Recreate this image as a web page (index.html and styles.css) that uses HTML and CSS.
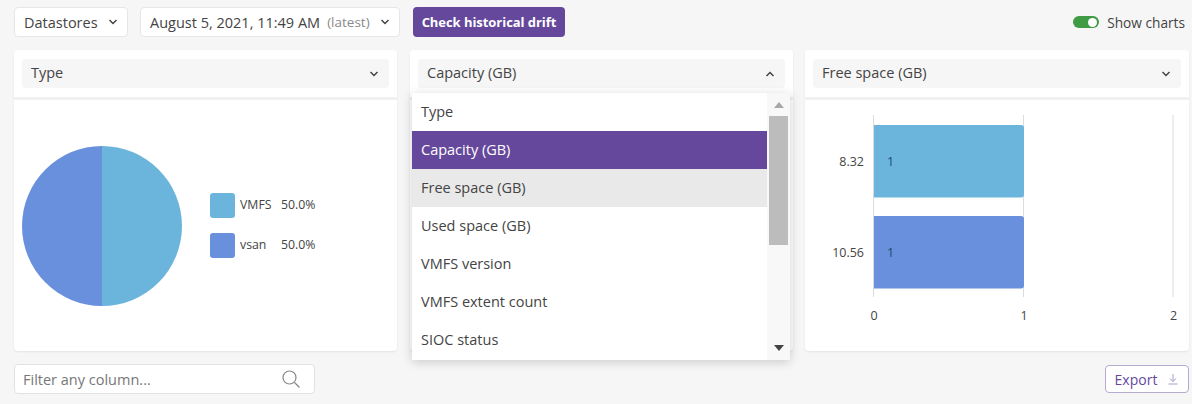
FILE: index.html
```html
<!DOCTYPE html>
<html lang="en">
<head>
<meta charset="utf-8">
<title>Datastores</title>
<link rel="stylesheet" href="styles.css">
</head>
<body>
<div class="page">
  <div class="toolbar">
    <button class="btn btn-kind">Datastores<svg class="chev" viewBox="0 0 10 6"><path d="M1.5 1 5 4.5 8.5 1"/></svg></button>
    <button class="btn btn-date">August 5, 2021, 11:49 AM <span class="latest">(latest)</span><svg class="chev" viewBox="0 0 10 6"><path d="M1.5 1 5 4.5 8.5 1"/></svg></button>
    <button class="btn-primary">Check historical drift</button>
    <div class="toggle-wrap"><span class="toggle"><span class="knob"></span></span><span>Show charts</span></div>
  </div>

  <div class="cards">
    <section class="card">
      <div class="card-head"><div class="select"><span>Type</span><svg class="chev" viewBox="0 0 10 6"><path d="M1.5 1 5 4.5 8.5 1"/></svg></div></div>
      <div class="card-body pie-body">
        <svg class="pie" viewBox="0 0 160 160"><path class="c1" d="M80 0a80 80 0 0 1 0 160z"/><path class="c2" d="M80 0a80 80 0 0 0 0 160z"/></svg>
        <div class="legend">
          <div class="legend-row"><span class="swatch c1-bg"></span><span class="legend-name">VMFS</span><span>50.0%</span></div>
          <div class="legend-row"><span class="swatch c2-bg"></span><span class="legend-name">vsan</span><span>50.0%</span></div>
        </div>
      </div>
    </section>

    <section class="card card-open">
      <div class="card-head"><div class="select"><span>Capacity (GB)</span><svg class="chev" viewBox="0 0 10 6"><path d="M1.5 5 5 1.5 8.5 5"/></svg></div></div>
      <div class="card-body"></div>
      <div class="menu">
        <ul class="menu-list">
          <li>Type</li>
          <li class="selected">Capacity (GB)</li>
          <li class="hover">Free space (GB)</li>
          <li>Used space (GB)</li>
          <li>VMFS version</li>
          <li>VMFS extent count</li>
          <li>SIOC status</li>
        </ul>
        <div class="scrollbar">
          <span class="arrow-up"></span>
          <span class="thumb"></span>
          <span class="arrow-down"></span>
        </div>
      </div>
    </section>

    <section class="card card-last">
      <div class="card-head"><div class="select"><span>Free space (GB)</span><svg class="chev" viewBox="0 0 10 6"><path d="M1.5 1 5 4.5 8.5 1"/></svg></div></div>
      <div class="card-body">
        <svg class="bars" viewBox="0 0 384 251">
          <line class="grid" x1="68.5" y1="15" x2="68.5" y2="197"/>
          <line class="grid" x1="218.5" y1="15" x2="218.5" y2="197"/>
          <line class="grid" x1="368" y1="15" x2="368" y2="197"/>
          <path class="c1" d="M69 25h147a3 3 0 0 1 3 3v66.500a3 3 0 0 1-3 3H69z"/>
          <path class="c2" d="M69 116h147a3 3 0 0 1 3 3v66.500a3 3 0 0 1-3 3H69z"/>
          <text class="tick" x="59" y="66" text-anchor="end">8.32</text>
          <text class="tick" x="59" y="157" text-anchor="end">10.56</text>
          <text class="val" x="82" y="66">1</text>
          <text class="val" x="82" y="157">1</text>
          <text class="tick" x="69" y="220" text-anchor="middle">0</text>
          <text class="tick" x="219" y="220" text-anchor="middle">1</text>
          <text class="tick" x="368.500" y="220" text-anchor="middle">2</text>
        </svg>
      </div>
    </section>
  </div>

  <div class="footer">
    <div class="filter"><span>Filter any column...</span>
      <svg class="search" viewBox="0 0 18 18"><circle cx="7.500" cy="7.500" r="6.500"/><path d="M12.500 12.500 17.500 17.500"/></svg>
    </div>
    <button class="export">Export<svg class="dl" viewBox="0 0 12 12"><path d="M6 1v7.500M2.800 5.500 6 8.500l3.200-3M1.500 11h9"/></svg></button>
  </div>
</div>
</body>
</html>
```

FILE: styles.css
```css
* { box-sizing: border-box; }
html, body { margin: 0; padding: 0; }
body {
  width: 1192px;
  height: 404px;
  overflow: hidden;
  background: #f6f6f6;
  font-family: "Open Sans", "Liberation Sans", sans-serif;
  font-size: 14.500px;
  color: #444;
}
.page { padding: 7px 3px 0 14px; }
.toolbar { display: flex; align-items: center; height: 30px; }
.btn {
  height: 30px;
  display: flex;
  align-items: center;
  background: #fff;
  border: 1px solid #e6e6e6;
  border-radius: 4px;
  font: inherit;
  color: #444;
  padding: 0 9px;
  white-space: nowrap;
}
.btn-kind { width: 114px; justify-content: space-between; }
.btn-date { width: 260px; margin-left: 12px; justify-content: flex-start; }
.btn-date .chev { margin-left: auto; }
.latest { font-size: 13.500px; color: #8a8a8a; margin-left: 7px; }
.chev { width: 10px; height: 6px; flex: none; fill: none; stroke: #444; stroke-width: 1.500; }
.btn-primary {
  height: 30px;
  width: 152px;
  margin-left: 13px;
  border: 0;
  border-radius: 4px;
  background: #65489c;
  color: #fff;
  font: 700 13px "Open Sans", sans-serif;
  letter-spacing: -0.05px;
  padding: 0;
}
.toggle-wrap { margin-left: auto; margin-right: 4px; display: flex; align-items: center; gap: 8px; font-size: 13.700px; }
.toggle { width: 26px; height: 12px; border-radius: 6px; background: #3f9c45; display: flex; align-items: center; justify-content: flex-end; padding-right: 2px; }
.knob { width: 9px; height: 9px; border-radius: 50%; background: #fff; }

.cards { display: grid; grid-template-columns: 383px 383px 383px; column-gap: 13px; margin-top: 13px; }
.card { position: relative; height: 301px; background: #fff; border-radius: 4px; box-shadow: 0 1px 2px rgba(0,0,0,.08); display: flex; flex-direction: column; }
.card-last { margin-left: -1px; }
.card-head { height: 50px; padding: 9px 8px 0; border-bottom: 3px solid #f1f1f1; flex: none; }
.select { height: 29px; background: #f6f6f6; border-radius: 4px; display: flex; align-items: center; justify-content: space-between; padding: 0 10px 2px 9px; }
.select .chev { margin-top: 2px; }
.card-body { flex: 1; min-height: 0; }
.pie-body { display: flex; align-items: flex-start; padding: 46px 0 0 8px; }
.pie { width: 160px; height: 160px; flex: none; display: block; }
.c1 { fill: #6bb5dd; }
.c2 { fill: #6890dc; }
.c1-bg { background: #6bb5dd; }
.c2-bg { background: #6890dc; }
.legend { margin: 47px 0 0 28px; display: flex; flex-direction: column; gap: 15px; font-size: 12.300px; }
.legend-row { display: flex; align-items: flex-start; height: 25px; line-height: 23px; }
.swatch { width: 25px; height: 25px; border-radius: 3px; margin-right: 5px; }
.legend-name { width: 41px; }

.menu {
  position: absolute;
  left: 2px;
  top: 43px;
  width: 378px;
  height: 267px;
  background: #fff;
  display: flex;
  box-shadow: 0 2px 10px rgba(0,0,0,.18);
  z-index: 2;
}
.menu-list { list-style: none; margin: 0; padding: 0; flex: 1; }
.menu-list li { height: 38px; line-height: 38px; padding-left: 9px; }
.menu-list .selected { background: #65489c; color: #fff; }
.menu-list .hover { background: #e9e9e9; }
.scrollbar { width: 23px; background: #f8f8f8; display: flex; flex-direction: column; align-items: center; padding-top: 9px; }
.arrow-up { width: 0; height: 0; border: 5px solid transparent; border-top: 0; border-bottom: 6px solid #a8a8a8; }
.thumb { width: 19px; height: 129px; background: #bcbcbc; margin-top: 8px; }
.arrow-down { width: 0; height: 0; border: 5px solid transparent; border-bottom: 0; border-top: 6px solid #444; margin-top: auto; margin-bottom: 9px; }

.bars { width: 384px; height: 251px; display: block; }
.grid { stroke: #dcdcdc; stroke-width: 1; }
.tick { font-size: 12.500px; fill: #444; }
.val { font-size: 12.500px; fill: #1f4a6b; }

.footer { display: flex; justify-content: space-between; align-items: center; margin-top: 13px; }
.filter { width: 301px; height: 30px; background: #fff; border: 1px solid #e2e2e2; border-radius: 4px; display: flex; align-items: center; justify-content: space-between; padding: 0 14px 0 8px; color: #777; }
.search { width: 18px; height: 18px; fill: none; stroke: #888; stroke-width: 1.200; }
.export { width: 84px; height: 28px; background: #fff; border: 1px solid #b7aad0; border-radius: 4px; color: #65489c; font: 500 14px "Open Sans", sans-serif; display: flex; align-items: center; justify-content: center; gap: 10px; padding: 0; }
.dl { width: 12px; height: 12px; fill: none; stroke: #a99cc6; stroke-width: 1; }
```
